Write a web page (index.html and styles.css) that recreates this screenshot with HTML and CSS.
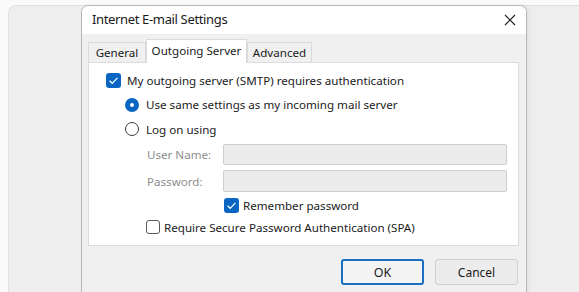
FILE: index.html
```html
<!DOCTYPE html>
<html>
<head>
<meta charset="utf-8">
<link rel="stylesheet" href="styles.css">
</head>
<body>
<div class="desk">
  <div class="backwin"></div>
  <div class="dialog">
    <div class="titlebar">
      <span class="title">Internet E-mail Settings</span>
      <svg class="close" width="12" height="12" viewBox="0 0 12 12"><path d="M1 1 L11 11 M11 1 L1 11" stroke="#222" stroke-width="1.2" fill="none"/></svg>
    </div>
    <div class="body">
      <div class="tabs">
        <div class="tab t-general">General</div>
        <div class="tab t-out active">Outgoing Server</div>
        <div class="tab t-adv">Advanced</div>
      </div>
      <div class="panel">
        <div class="row r1">
          <span class="cb checked"><svg viewBox="0 0 15 15" width="15" height="15"><path d="M3.6 7.8 L6.2 10.3 L11.4 4.8" stroke="#fff" stroke-width="1.2" fill="none"/></svg></span>
          <span class="lbl">My outgoing server (SMTP) requires authentication</span>
        </div>
        <div class="row r2">
          <span class="radio on"></span>
          <span class="lbl">Use same settings as my incoming mail server</span>
        </div>
        <div class="row r3">
          <span class="radio"></span>
          <span class="lbl">Log on using</span>
        </div>
        <div class="row field f1">
          <span class="flabel">User Name:</span>
          <span class="input"></span>
        </div>
        <div class="row field f2">
          <span class="flabel">Password:</span>
          <span class="input"></span>
        </div>
        <div class="row r6">
          <span class="cb checked"><svg viewBox="0 0 15 15" width="15" height="15"><path d="M3.6 7.8 L6.2 10.3 L11.4 4.8" stroke="#fff" stroke-width="1.2" fill="none"/></svg></span>
          <span class="lbl small-gap">Remember password</span>
        </div>
        <div class="row r7">
          <span class="cb empty"></span>
          <span class="lbl small-gap">Require Secure Password Authentication (SPA)</span>
        </div>
      </div>
      <div class="buttons">
        <div class="btn ok">OK</div>
        <div class="btn cancel">Cancel</div>
      </div>
    </div>
  </div>
</div>
</body>
</html>
```
FILE: styles.css
```css
html, body {
  margin: 0;
  padding: 0;
}
body {
  width: 579px;
  height: 292px;
  overflow: hidden;
  background: #fafafa;
  font-family: "Noto Sans", "Open Sans", sans-serif;
  font-size: 11.6px;
  color: #1b1b1b;
}
.desk {
  position: relative;
  width: 579px;
  height: 292px;
  overflow: hidden;
}
.backwin {
  position: absolute;
  left: 8px;
  top: 5px;
  width: 571px;
  height: 287px;
  box-sizing: border-box;
  background: #eeeeee;
  border: 1px solid #e3e3e3;
  border-right: none;
  border-bottom: none;
  border-radius: 8px 0 0 0;
}
.dialog {
  position: absolute;
  left: 81px;
  top: 5px;
  width: 446px;
  height: 287px;
  box-sizing: border-box;
  background: #f0f0f0;
  border: 1px solid #b7b7b7;
  border-bottom: none;
  border-radius: 7px 7px 0 0;
  box-shadow: 2px 0 4px rgba(0,0,0,0.06);
  display: flex;
  flex-direction: column;
  overflow: hidden;
}
.titlebar {
  height: 28px;
  background: #ffffff;
  display: flex;
  align-items: center;
  justify-content: space-between;
  padding: 0 10px 0 10px;
  flex: none;
}
.title {
  font-size: 13px;
  letter-spacing: -0.35px;
  color: #1a1a1a;
  margin-top: -2px;
}
.close {
  margin-top: -1px;
}
.body {
  padding: 5px 7px 0 6px;
  display: flex;
  flex-direction: column;
}
.tabs {
  display: flex;
  align-items: flex-end;
  height: 23px;
  position: relative;
  z-index: 2;
}
.tab {
  box-sizing: border-box;
  height: 20px;
  display: flex;
  align-items: center;
  justify-content: center;
  border: 1px solid #dadada;
  border-bottom: none;
  background: #f0f0f0;
  font-size: 11.6px;
}
.t-general { width: 58px; }
.t-out { width: 101px; }
.t-adv { width: 65px; }
.tab.active {
  height: 24px;
  background: #ffffff;
  margin-bottom: -1px;
  padding-bottom: 3px;
}
.panel {
  box-sizing: border-box;
  height: 184px;
  width: 431px;
  background: #ffffff;
  border: 1px solid #dcdcdc;
  padding-top: 5px;
  display: flex;
  flex-direction: column;
}
.row {
  display: flex;
  align-items: center;
  flex: none;
}
.lbl {
  font-size: 11.6px;
  white-space: nowrap;
}
.r1 { height: 24px; padding-left: 17px; }
.r1 .lbl { margin-left: 6px; }
.r2 { height: 25px; padding-left: 36px; }
.r3 { height: 24px; padding-left: 36px; }
.r2 .lbl, .r3 .lbl { margin-left: 7px; }
.field { padding-left: 58px; }
.f1 { height: 21px; margin-top: 3px; }
.f2 { height: 22px; margin-top: 5px; }
.flabel {
  width: 76px;
  color: #8d8d8d;
  font-size: 11.6px;
}
.input {
  box-sizing: border-box;
  width: 284px;
  height: 100%;
  background: #ececec;
  border: 1px solid #c7cfd7;
  border-radius: 2px;
}
.r6 { height: 22px; margin-top: 2px; padding-left: 135px; }
.r7 { height: 22px; padding-left: 57px; }
.small-gap { margin-left: 4px; }
.cb {
  box-sizing: border-box;
  width: 15px;
  height: 15px;
  border-radius: 3px;
  display: inline-flex;
  flex: none;
}
.cb.checked {
  background: #0a66c2;
}
.cb.empty {
  width: 14px;
  height: 14px;
  border: 1px solid #5a5a5a;
  background: #fff;
}
.radio {
  box-sizing: border-box;
  width: 14px;
  height: 14px;
  border-radius: 50%;
  border: 1px solid #3c3c3c;
  flex: none;
  background: #fff;
}
.radio.on {
  border: 5px solid #0a66c2;
  background: #fff;
}
.buttons {
  display: flex;
  justify-content: flex-end;
  gap: 11px;
  margin-top: 13px;
  padding-right: 1px;
}
.btn {
  box-sizing: border-box;
  width: 83px;
  height: 26px;
  display: flex;
  align-items: center;
  justify-content: center;
  border-radius: 3px;
  font-size: 12px;
}
.ok {
  background: #f4f4f4;
  border: 2px solid #1a6fc4;
  font-size: 12.5px;
}
.cancel {
  background: #ececec;
  border: 1px solid #cfcfcf;
}
```
